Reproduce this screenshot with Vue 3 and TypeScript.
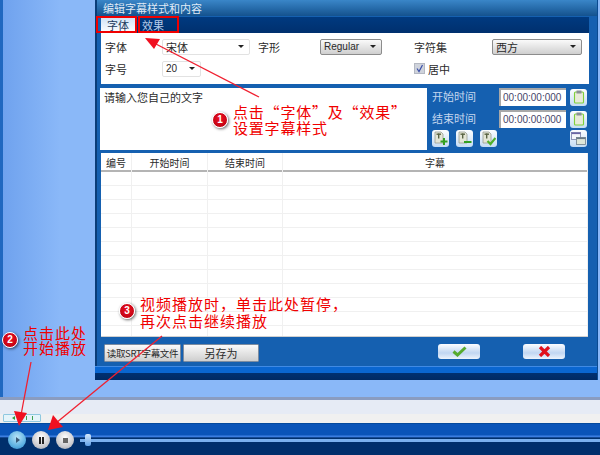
<template>
  <div class="screen">
    <div class="desk">
      <div class="dialog">
        <div class="title">编辑字幕样式和内容</div>
        <div class="dialog-body">
          <div class="tabs">
            <span class="tab active">字体</span>
            <span class="tab">效果</span>
          </div>
          <div class="panel">
            <div class="form-row">
              <span class="label l1">字体</span>
              <div class="sel white w88"><span>宋体</span><i class="caret" /></div>
              <span class="label l2">字形</span>
              <div class="sel grey w62"><span class="latin">Regular</span><i class="caret" /></div>
              <span class="label l3">字符集</span>
              <div class="sel grey w90"><span>西方</span><i class="caret" /></div>
            </div>
            <div class="form-row second">
              <span class="label l1">字号</span>
              <div class="sel white w39"><span class="latin">20</span><i class="caret" /></div>
              <label class="center-check">
                <span class="check"><svg width="9" height="9" viewBox="0 0 9 9"><path d="M2 4.5 L4 7.5 L7.5 1" fill="none" stroke="#3a4fa8" stroke-width="1.2" /></svg></span>
                居中
              </label>
            </div>
          </div>

          <div class="edit-row">
            <div class="editor">请输入您自己的文字</div>
            <div class="times">
              <div v-for="t in timeRows" :key="t" class="time-row">
                <span class="time-label">{{ t }}</span>
                <div class="time-input">00:00:00:000</div>
                <div class="icon-btn">
                  <svg width="12" height="14" viewBox="0 0 12 14">
                    <rect x="1.5" y="2" width="9" height="11" rx="1" fill="#e8ead8" stroke="#7fd03a" stroke-width="1.1" />
                    <rect x="3.5" y="0.5" width="5" height="3" fill="#8a8f96" />
                  </svg>
                </div>
              </div>
              <div class="tool-row">
                <div v-for="tool in tools" :key="tool.name" class="icon-btn tool">
                  <svg width="15" height="15" viewBox="0 0 15 15">
                    <path d="M2 1 H8 L10 3 V12 H2 Z" fill="#e4e6d6" stroke="#9a9e92" stroke-width="0.8" />
                    <rect x="3.5" y="2.5" width="4.5" height="1.4" fill="#5a6444" />
                    <rect x="5" y="2.5" width="1.4" height="5" fill="#5a6444" />
                    <path v-if="tool.name === 'add'" d="M11 7 V14 M7.5 10.5 H14.5" stroke="#32a021" stroke-width="2" />
                    <path v-if="tool.name === 'remove'" d="M7 11 H14.5" stroke="#32a021" stroke-width="2" />
                    <path v-if="tool.name === 'ok'" d="M6.5 10 L9.5 13 L14.5 7" fill="none" stroke="#4fb02a" stroke-width="2.2" />
                  </svg>
                </div>
                <div class="icon-btn last">
                  <svg width="15" height="13" viewBox="0 0 15 13">
                    <rect x="0.5" y="0.5" width="9" height="7" fill="#f4f6fa" stroke="#7a80a8" stroke-width="0.8" />
                    <rect x="0.5" y="0.5" width="9" height="1.6" fill="#6a64a4" />
                    <rect x="5.5" y="5.5" width="9" height="7" fill="#dfe7d8" stroke="#70808c" stroke-width="0.8" />
                    <rect x="5.5" y="5.5" width="9" height="1.6" fill="#6a7a88" />
                  </svg>
                </div>
              </div>
            </div>
          </div>

          <div class="table">
            <div class="thead">
              <span v-for="c in columns" :key="c" class="th">{{ c }}</span>
            </div>
            <div v-for="n in 12" :key="n" class="tr">
              <span v-for="c in columns" :key="c" class="td" />
            </div>
          </div>

          <div class="actions">
            <div class="btn b-srt">读取SRT字幕文件</div>
            <div class="btn b-save">另存为</div>
            <div class="pill b-ok">
              <svg width="15" height="11" viewBox="0 0 15 11"><path d="M1.5 5.5 L5.5 9 L13.5 1.5" fill="none" stroke="#56ab2f" stroke-width="3" /></svg>
            </div>
            <div class="pill b-no">
              <svg width="13" height="11" viewBox="0 0 13 11"><path d="M2 1 L11 10 M11 1 L2 10" fill="none" stroke="#e0101c" stroke-width="3.2" /></svg>
            </div>
          </div>
        </div>
        <div class="dialog-foot" />
      </div>
    </div>

    <div class="track">
      <div class="clip-tab"><i class="tri" /><i class="tick" /><i class="tick" /><i class="tick" /></div>
    </div>

    <div class="player">
      <div class="round play"><i class="play-tri" /></div>
      <div class="round"><i class="pause" /><i class="pause" /></div>
      <div class="round"><i class="stop" /></div>
      <div class="slider"><i class="thumb" /></div>
    </div>

    <!-- annotations drawn on top of the screenshot -->
    <div class="mark m1" />
    <div class="mark m2" />
    <svg class="arrows" width="600" height="455" viewBox="0 0 600 455">
      <g v-for="a in arrows" :key="a.id">
        <line :x1="a.x1" :y1="a.y1" :x2="a.x2" :y2="a.y2" stroke="#f02030" stroke-width="1.3" />
        <polygon :points="a.head" fill="#f01020" />
      </g>
    </svg>
    <div v-for="b in badges" :key="b.n" class="badge" :style="{ left: b.x + 'px', top: b.y + 'px' }">{{ b.n }}</div>
    <div class="note n1">点击“字体”及“效果”<br />设置字幕样式</div>
    <div class="note n2">点击此处<br />开始播放</div>
    <div class="note n3">视频播放时&#xFF0C;单击此处暂停&#xFF0C;<br />再次点击继续播放</div>
  </div>
</template>

<script setup lang="ts">
const timeRows: string[] = ['开始时间', '结束时间']
const tools = [{ name: 'add' }, { name: 'remove' }, { name: 'ok' }]
const columns: string[] = ['编号', '开始时间', '结束时间', '字幕']

const arrows = [
  { id: 1, x1: 259, y1: 97, x2: 152, y2: 42, head: '145,38 160,39 154,49' },
  { id: 2, x1: 31, y1: 362, x2: 21, y2: 415, head: '19,426 14,411 27,413' },
  { id: 3, x1: 162, y1: 336, x2: 56, y2: 423, head: '48,430 53,415 63,427' },
]

const badges = [
  { n: 1, x: 212, y: 112 },
  { n: 2, x: 2, y: 332 },
  { n: 3, x: 119, y: 303 },
]
</script>

<style>
html,
body {
  margin: 0;
  background: #8ab8f8;
}
</style>

<style scoped>
.screen {
  position: relative;
  width: 600px;
  height: 455px;
  overflow: hidden;
  display: flex;
  flex-direction: column;
  font-family: "Noto Sans CJK SC", "Liberation Sans", sans-serif;
  font-size: 11px;
  color: #2a2a2a;
}

.desk {
  height: 397px;
  box-sizing: border-box;
  padding-left: 95px;
  flex-shrink: 0;
  background: linear-gradient(90deg, #2068c0 0, #2068c0 3px, #6fa2ee 3px, #8ab8f8 60px);
}

.dialog {
  width: 503px;
  height: 380px;
  display: flex;
  flex-direction: column;
  background: #1560b0;
  border-right: 1px solid #0a4a90;
  box-sizing: border-box;
}

.title {
  height: 16px;
  line-height: 17px;
  padding-left: 6px;
  color: #dfe9f6;
  background: linear-gradient(#3a86c8, #14528e);
  border-left: 2px solid #0a3d78;
}

.dialog-body {
  flex: 1;
  min-height: 0;
  padding: 1px 9px 0 3px;
  border-left: 2px solid #0a3d78;
}

.tabs {
  display: flex;
  height: 16px;
  margin-left: 1px;
  margin-right: -1px;
  background: linear-gradient(#003a80, #00306e);
}

.tab {
  width: 36px;
  text-align: center;
  line-height: 17px;
  color: #b7cdea;
}

.tab.active {
  width: 34px;
  color: #1c3a5c;
  background: linear-gradient(#cfe2f6, #fff);
}

.panel {
  height: 51px;
  margin: 0 -1px 4px 1px;
  background: #fff;
  box-sizing: border-box;
  padding-top: 5px;
}

.form-row {
  display: flex;
  align-items: center;
  height: 17px;
}

.form-row.second {
  margin-top: 5px;
}

.label {
  flex-shrink: 0;
  box-sizing: border-box;
}

.l1 {
  width: 61px;
  padding-left: 4px;
}

.l2 {
  width: 70px;
  padding-left: 8px;
}

.l3 {
  width: 110px;
  padding-left: 32px;
}

.sel {
  height: 16px;
  box-sizing: border-box;
  display: flex;
  align-items: center;
  justify-content: space-between;
  padding: 0 5px 0 3px;
  border-radius: 2px;
  flex-shrink: 0;
}

.sel.white {
  background: #fff;
  border: 1px solid #e2e2e2;
}

.sel.grey {
  background: linear-gradient(#fafafa, #cfcfcf);
  border: 1px solid #8c8c8c;
}

.latin {
  font-family: "Liberation Sans", sans-serif;
  font-size: 10px;
}

.caret {
  width: 0;
  height: 0;
  border-left: 3px solid transparent;
  border-right: 3px solid transparent;
  border-top: 3px solid #222;
}

.w88 {
  width: 88px;
}

.w62 {
  width: 62px;
}

.w90 {
  width: 90px;
}

.w39 {
  width: 39px;
}

.center-check {
  display: flex;
  align-items: center;
  gap: 3px;
  margin-left: 213px;
}

.check {
  width: 9px;
  height: 9px;
  background: #cfd3dc;
  border: 1px solid #b4b8c2;
  display: flex;
}

.edit-row {
  display: flex;
  height: 62px;
  margin-bottom: 3px;
}

.editor {
  width: 327px;
  flex-shrink: 0;
  background: #fff;
  padding: 1px 4px;
  box-sizing: border-box;
  line-height: 17px;
}

.times {
  flex: 1;
  padding-left: 5px;
}

.time-row {
  display: flex;
  align-items: center;
  height: 18px;
  margin-bottom: 4px;
}

.time-label {
  width: 67px;
  flex-shrink: 0;
  color: #c2d6ee;
  padding-bottom: 2px;
}

.time-input {
  width: 67px;
  height: 18px;
  flex-shrink: 0;
  box-sizing: border-box;
  background: #fff;
  border-top: 2px solid #a8a8a8;
  border-left: 2px solid #a8a8a8;
  color: #46466a;
  font-family: "Liberation Sans", sans-serif;
  font-size: 10px;
  line-height: 15px;
  padding-left: 2px;
  white-space: nowrap;
  overflow: hidden;
}

.icon-btn {
  width: 17px;
  height: 17px;
  margin-left: 4px;
  border-radius: 3px;
  background: linear-gradient(#fdfeff, #c4dcf4);
  display: flex;
  align-items: center;
  justify-content: center;
  flex-shrink: 0;
}

.tool-row {
  display: flex;
  height: 17px;
  margin-top: -2px;
  padding-right: 1px;
}

.tool {
  margin-left: 0;
  margin-right: 7px;
}

.icon-btn.last {
  margin-left: auto;
  margin-right: 0;
}

.table {
  height: 184px;
  margin-left: 1px;
  background: #fff;
  border-bottom: 1px solid #d0d0d0;
  box-sizing: border-box;
  overflow: hidden;
}

.thead,
.tr {
  display: grid;
  grid-template-columns: 31px 76px 75px 1fr;
}

.thead {
  height: 19px;
  border-bottom: 2px solid #b4b4b4;
  box-sizing: border-box;
  line-height: 20px;
  text-align: center;
}

.th {
  border-right: 1px solid #f0f0f0;
  font-size: 10px;
}

.tr {
  height: 14px;
  box-sizing: border-box;
  border-bottom: 1px solid #f0f0f0;
}

.td {
  border-right: 1px solid #f0f0f0;
}

.actions {
  display: flex;
  align-items: flex-start;
  padding-top: 7px;
}

.btn {
  height: 18px;
  box-sizing: border-box;
  line-height: 16px;
  text-align: center;
  background: linear-gradient(#fafafa, #cfcfcf);
  border: 1px solid #7c8ca0;
  border-radius: 1px;
  flex-shrink: 0;
}

.b-srt {
  width: 77px;
  margin-left: 4px;
  white-space: nowrap;
  font-size: 9.5px;
  letter-spacing: -0.3px;
}

.b-save {
  width: 76px;
  margin-left: 2px;
}

.pill {
  width: 42px;
  height: 15px;
  border-radius: 3px;
  background: linear-gradient(#fcfdff, #c0d6f2 60%, #eef4fc);
  display: flex;
  align-items: center;
  justify-content: center;
  flex-shrink: 0;
}

.b-ok {
  margin-left: 179px;
}

.b-no {
  margin-left: 43px;
}

.dialog-foot {
  height: 13px;
  flex-shrink: 0;
  background: linear-gradient(#0a66d0 0, #0a66d0 45%, #003070 50%, #002a64 100%);
  border-top: 1px solid #3f8ae4;
}

.track {
  height: 26px;
  flex-shrink: 0;
  box-sizing: border-box;
  border-top: 3px solid #8a9cc0;
  background: linear-gradient(#e6ebf5 60%, #f0f0f0 60%);
  position: relative;
  display: flex;
  align-items: flex-end;
  padding: 0 0 1px 3px;
}

.clip-tab {
  width: 38px;
  height: 8px;
  border: 1px solid #8fc8e0;
  border-radius: 1px;
  background: #e4f4fa;
  display: flex;
  align-items: center;
  gap: 5px;
  padding-left: 8px;
  box-sizing: border-box;
}

.tri {
  width: 0;
  height: 0;
  border-top: 2px solid transparent;
  border-bottom: 2px solid transparent;
  border-right: 3px solid #30a040;
}

.tick {
  width: 1px;
  height: 4px;
  background: #40a050;
}

.player {
  flex: 1;
  display: flex;
  align-items: center;
  gap: 6px;
  padding: 2px 0 0 8px;
  background: linear-gradient(#00428c 0, #0a54b8 4%, #0a54b8 38%, #3b7de0 40%, #3b7de0 44%, #002f6c 46%, #002f6c 100%);
}

.round {
  width: 18px;
  height: 18px;
  border-radius: 50%;
  background: radial-gradient(circle at 50% 35%, #ffffff, #c8c8cc 65%, #8f96a4);
  display: flex;
  align-items: center;
  justify-content: center;
  gap: 1px;
  flex-shrink: 0;
}

.round.play {
  background: radial-gradient(circle at 50% 35%, #b8e4f8, #58aee0 65%, #2f80c4);
}

.play-tri {
  width: 0;
  height: 0;
  border-top: 3px solid transparent;
  border-bottom: 3px solid transparent;
  border-left: 4px solid #3a5a78;
  margin-left: 1px;
}

.pause {
  width: 2px;
  height: 7px;
  background: #222;
}

.stop {
  width: 5px;
  height: 5px;
  background: #666;
}

.slider {
  flex: 1;
  height: 3px;
  background: #7ab0ee;
  position: relative;
}

.thumb {
  position: absolute;
  left: 5px;
  top: -5px;
  width: 6px;
  height: 12px;
  border-radius: 2px;
  background: linear-gradient(#d4e8fc, #60a0e8);
}

.mark {
  position: absolute;
  top: 16px;
  height: 17px;
  box-sizing: border-box;
  border: 2px solid #f00000;
}

.m1 {
  left: 96px;
  width: 41px;
}

.m2 {
  left: 138px;
  width: 41px;
}

.arrows {
  position: absolute;
  left: 0;
  top: 0;
}

.badge {
  position: absolute;
  width: 16px;
  height: 16px;
  border-radius: 50%;
  background: radial-gradient(circle at 50% 40%, #f01020, #b00010);
  border: 1px solid #fff;
  box-sizing: border-box;
  box-shadow: 1px 1px 3px rgba(0, 0, 0, 0.6);
  color: #fff;
  font-family: "Liberation Sans", sans-serif;
  font-size: 10px;
  font-weight: bold;
  text-align: center;
  line-height: 14px;
}

.note {
  position: absolute;
  color: #f00000;
  font-size: 15px;
  letter-spacing: 1px;
  white-space: nowrap;
}

.n1 {
  left: 233px;
  top: 104px;
  line-height: 16px;
  letter-spacing: 0.8px;
}

.n2 {
  left: 23px;
  top: 325px;
  line-height: 15px;
}

.n3 {
  left: 140px;
  top: 295px;
  line-height: 17px;
}
</style>
